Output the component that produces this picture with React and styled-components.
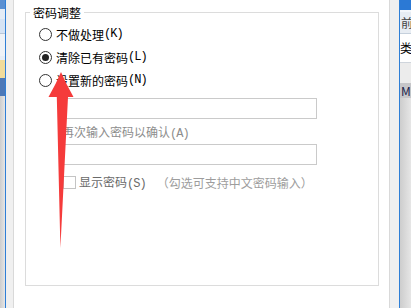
import React from "react";
import styled, { createGlobalStyle } from "styled-components";

const GlobalStyle = createGlobalStyle`
  html, body {
    margin: 0;
    padding: 0;
    background: #ffffff;
  }
  body {
    font-family: "Noto Sans CJK SC", "Noto Sans", sans-serif;
  }
`;

const Screen = styled.div`
  position: relative;
  display: flex;
  width: 411px;
  height: 308px;
  overflow: hidden;
  background: #ffffff;
`;

/* windows peeking out behind the dialog */
const BackWindow = styled.div`
  display: flex;
  flex-direction: column;
  width: ${(p) => p.width}px;
  flex: none;
  overflow: hidden;
  background: linear-gradient(to right, #cdcdcd, #e6e6e6);
`;

const Band = styled.div`
  flex: none;
  height: ${(p) => p.h}px;
  background: ${(p) => p.bg};
  border-bottom: ${(p) => (p.line ? `1px solid ${p.line}` : "none")};
  color: ${(p) => p.color || "#222"};
  font-size: 12px;
  line-height: ${(p) => p.h}px;
  white-space: nowrap;
  padding-left: ${(p) => p.indent || 0}px;
`;

const AccentLine = styled.div`
  flex: none;
  width: 1px;
  background: #2f7fd6;
`;

const Frame = styled.div`
  flex: none;
  width: ${(p) => p.width}px;
  background: #f0f0f0;
  border-${(p) => p.side}: 1px solid #d9d9d9;
  box-sizing: border-box;
`;

const Dialog = styled.div`
  flex: none;
  width: 375px;
  display: flex;
  flex-direction: column;
  background: #ffffff;
`;

const Group = styled.fieldset`
  box-sizing: border-box;
  width: 354px;
  height: 281px;
  margin: 5px 0 0 11px;
  padding: 0;
  border: 1px solid #dcdcdc;
`;

const Legend = styled.legend`
  margin-left: 4px;
  padding: 0 3px;
  font-size: 12px;
  line-height: 15px;
  color: #000;
`;

const Body = styled.div`
  display: flex;
  flex-direction: column;
  padding: 3px 0 0 13px;
`;

const RadioRow = styled.label`
  display: flex;
  align-items: center;
  height: 22px;
  margin-bottom: 1px;
  font-size: 12px;
  color: #000;
`;

const Radio = styled.span`
  box-sizing: border-box;
  width: 13px;
  height: 13px;
  border: 1px solid #333;
  border-radius: 50%;
  background: #fff;
  margin-right: 4px;
  display: flex;
  align-items: center;
  justify-content: center;

  &::after {
    content: "";
    width: 7px;
    height: 7px;
    border-radius: 50%;
    background: ${(p) => (p.checked ? "#222" : "transparent")};
  }
`;

const Key = styled.span`
  font-family: "Liberation Mono", "DejaVu Sans Mono", monospace;
  font-size: 12px;
  letter-spacing: -1px;
`;

const Indent = styled.div`
  display: flex;
  flex-direction: column;
  margin-left: 23px;
  margin-top: 6px;
`;

const Field = styled.div`
  box-sizing: border-box;
  width: 255px;
  height: 21px;
  border: 1px solid #cacaca;
  background: #fff;
`;

const FieldLabel = styled.div`
  height: 25px;
  padding-top: 6px;
  box-sizing: border-box;
  font-size: 12px;
  line-height: 14px;
  color: #8d8d8d;
`;

const CheckRow = styled.div`
  display: flex;
  align-items: center;
  height: 14px;
  margin-top: 10px;
  margin-left: 1px;
  font-size: 12px;
  white-space: nowrap;
`;

const CheckBox = styled.span`
  box-sizing: border-box;
  width: 13px;
  height: 13px;
  border: 1px solid #c4c4c4;
  background: #fff;
  margin-right: 3px;
`;

const CheckText = styled.span`
  color: ${(p) => (p.hint ? "#9d9d9d" : "#6a6a6a")};
  margin-left: ${(p) => (p.hint ? 11 : 0)}px;
`;

const Overlay = styled.svg`
  position: absolute;
  left: 0;
  top: 0;
  pointer-events: none;
`;

const Arrow = () => (
  <Overlay width="411" height="308" viewBox="0 0 411 308">
    <path
      d="M61 72 Q66 84 73.5 97 L68 97 L60.4 248 L56.8 97 L48.5 97 Q56 84 61 72 Z"
      fill="#f53b3b"
    />
  </Overlay>
);

export default function App() {
  return (
    <>
      <GlobalStyle />
      <Screen>
        <BackWindow width={5}>
          <Band h={9} bg="#5b90d2" />
          <Band h={10} bg="#e4ecf6" />
          <Band h={14} bg="#d5e3f4" line="#b9c6d6" />
          <Band h={22} bg="#eef2f7" />
          <Band h={4} bg="#e6edf5" />
          <Band h={18} bg="#f1dc9b" />
          <Band h={18} bg="#4d79b8" />
        </BackWindow>
        <AccentLine />
        <Frame width={8} side="right" />
        <Dialog>
          <Group>
            <Legend>密码调整</Legend>
            <Body>
              <RadioRow>
                <Radio />
                不做处理<Key>(K)</Key>
              </RadioRow>
              <RadioRow>
                <Radio checked />
                清除已有密码<Key>(L)</Key>
              </RadioRow>
              <RadioRow>
                <Radio />
                设置新的密码<Key>(N)</Key>
              </RadioRow>
              <Indent>
                <Field />
                <FieldLabel>
                  再次输入密码以确认<Key>(A)</Key>
                </FieldLabel>
                <Field />
                <CheckRow>
                  <CheckBox />
                  <CheckText>
                    显示密码<Key>(S)</Key>
                  </CheckText>
                  <CheckText hint>（勾选可支持中文密码输入）</CheckText>
                </CheckRow>
              </Indent>
            </Body>
          </Group>
        </Dialog>
        <Frame width={10} side="left" />
        <AccentLine />
        <BackWindow width={11}>
          <Band h={10} bg="#2b79d5" />
          <Band h={2} bg="#f4f7fb" />
          <Band h={21} bg="#e8edf3" line="#c5d0dc" color="#444" indent={1}>
            前
          </Band>
          <Band h={28} bg="#ffffff" line="#cfd5dc" color="#000">
            类
          </Band>
          <Band h={20} bg="#ececec" />
          <Band h={15} bg="#c6c6c9" color="#1b1f4a" indent={1}>
            Mi
          </Band>
        </BackWindow>
        <Arrow />
      </Screen>
    </>
  );
}
